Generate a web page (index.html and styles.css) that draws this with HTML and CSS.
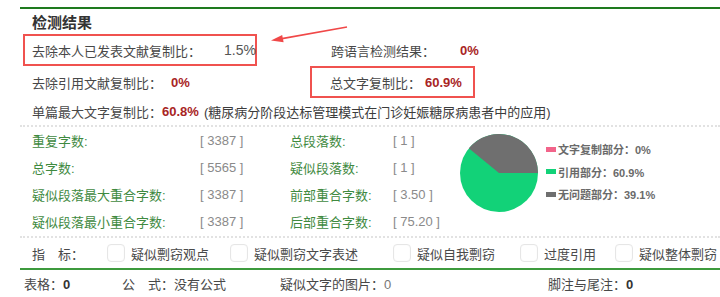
FILE: index.html
```html
<!DOCTYPE html>
<html lang="zh-CN">
<head>
<meta charset="utf-8">
<title>检测结果</title>
<link rel="stylesheet" href="styles.css">
</head>
<body>
<div class="page">
  <div class="top-rule"></div>
  <h2 class="title">检测结果</h2>

  <div class="summary">
    <div class="srow">
      <div class="cell box box1"><span class="lbl">去除本人已发表文献复制比：</span><span class="val plain v1">1.5%</span></div>
      <div class="cell pad2"><span class="lbl">跨语言检测结果：</span><span class="val red v2">0%</span></div>
    </div>
    <div class="srow">
      <div class="cell pad1"><span class="lbl">去除引用文献复制比：</span><span class="val red v3">0%</span></div>
      <div class="cell box box2"><span class="lbl">总文字复制比：</span><span class="val red v4">60.9%</span></div>
    </div>
    <div class="srow srow-last">
      <div class="cell pad1 wide"><span class="lbl">单篇最大文字复制比：</span><span class="val red">60.8%</span><span class="src">(糖尿病分阶段达标管理模式在门诊妊娠糖尿病患者中的应用)</span></div>
    </div>
  </div>

  <div class="stats">
    <div class="grid">
      <span class="k">重复字数:</span><span class="n">[ 3387 ]</span><span class="k">总段落数:</span><span class="n">[ 1 ]</span>
      <span class="k">总字数:</span><span class="n">[ 5565 ]</span><span class="k">疑似段落数:</span><span class="n">[ 1 ]</span>
      <span class="k">疑似段落最大重合字数:</span><span class="n">[ 3387 ]</span><span class="k">前部重合字数:</span><span class="n">[ 3.50 ]</span>
      <span class="k">疑似段落最小重合字数:</span><span class="n">[ 3387 ]</span><span class="k">后部重合字数:</span><span class="n">[ 75.20 ]</span>
    </div>
    <svg class="pie" width="80" height="80" viewBox="0 0 80 80">
      <circle cx="40" cy="40" r="39" fill="#12d278"/>
      <path d="M40 40 L79 40 A39 39 0 0 0 9.78 15.35 Z" fill="#6f6f6f"/>
    </svg>
    <ul class="legend">
      <li><i class="sw pink"></i>文字复制部分：0%</li>
      <li><i class="sw green"></i>引用部分：60.9%</li>
      <li><i class="sw grey"></i>无问题部分：39.1%</li>
    </ul>
  </div>

  <div class="indicators">
    <span class="ind-label">指　标：</span>
    <label class="opt o1"><span class="cb"></span>疑似剽窃观点</label>
    <label class="opt o2"><span class="cb"></span>疑似剽窃文字表述</label>
    <label class="opt o3"><span class="cb"></span>疑似自我剽窃</label>
    <label class="opt o4"><span class="cb"></span>过度引用</label>
    <label class="opt o5"><span class="cb"></span>疑似整体剽窃</label>
  </div>

  <div class="footer">
    <span class="f1">表格：<b>0</b></span>
    <span class="f2">公　式：没有公式</span>
    <span class="f3">疑似文字的图片：<span class="light">0</span></span>
    <span class="f4">脚注与尾注：<b>0</b></span>
  </div>

  <svg class="arrow" width="720" height="60" viewBox="0 0 720 60">
    <line x1="347" y1="27" x2="282" y2="38.6" stroke="#f04848" stroke-width="1.6"/>
    <polygon points="271,40.6 283.6,42.2 282.2,35.0" fill="#f04848"/>
  </svg>
</div>
</body>
</html>
```

FILE: styles.css
```css
* { box-sizing: border-box; }
html, body { margin: 0; padding: 0; background: #fff; }
body {
  font-family: "Liberation Sans", "Noto Sans CJK SC", sans-serif;
  font-size: 13px;
  color: #444;
  width: 720px;
  height: 297px;
  overflow: hidden;
}
.page { position: relative; width: 720px; height: 297px; overflow: hidden; }

.top-rule {
  margin: 7px 0 0 20px;
  border-top: 2px solid #1e7a1e;
}
.title {
  margin: 0;
  padding-left: 32px;
  height: 25px;
  line-height: 26px;
  font-size: 15px;
  font-weight: bold;
  color: #333;
  font-family: "Noto Sans CJK SC", sans-serif;
}

.summary { padding-left: 23px; }
.srow {
  display: grid;
  grid-template-columns: 287px auto;
  height: 32px;
}
.srow-last { height: 27px; }
.cell { display: flex; align-items: center; white-space: nowrap; }
.wide { grid-column: 1 / -1; }
.box { border: 2px solid #f0524f; height: 32px; }
.box1 { width: 234px; padding-left: 7px; }
.box2 { width: 165px; padding-left: 18px; }
.pad1 { padding-left: 9px; }
.pad2 { padding-left: 21px; }
.lbl { color: #484848; }
.val { font-weight: bold; }
.red { color: #a82424; }
.plain { font-weight: normal; color: #555; font-size: 14px; }
.v1 { margin-left: 23px; }
.v2 { margin-left: 25px; }
.v3 { margin-left: 9px; }
.v4 { margin-left: 4px; }
.src { color: #3c3c3c; margin-left: 5px; }

.stats {
  display: flex;
  align-items: flex-start;
  margin-left: 20px;
  padding-left: 12px;
  border-top: 2px dotted #e2e2e2;
  border-bottom: 2px dotted #e2e2e2;
  height: 113px;
}
.grid {
  display: grid;
  grid-template-columns: 168px 90px 103px 66px;
  grid-auto-rows: 27px;
  align-items: center;
}
.k { color: #3f8a3f; white-space: nowrap; }
.n { color: #8a8a8a; white-space: nowrap; }
.pie { margin-top: 6px; flex: none; }
.legend {
  list-style: none;
  margin: 11px 0 0 7px;
  padding: 0;
  font-size: 11px;
  font-weight: bold;
  color: #6a6a6a;
}
.legend li { display: flex; align-items: center; height: 22.5px; white-space: nowrap; }
.sw { display: inline-block; width: 10px; height: 5px; margin-right: 2px; }
.pink { background: #f2648a; }
.green { background: #12d278; }
.grey { background: #6f6f6f; }

.indicators {
  display: flex;
  align-items: center;
  height: 30px;
  padding-left: 32px;
}
.ind-label { width: 75px; color: #484848; white-space: nowrap; }
.opt { display: flex; align-items: center; gap: 6px; white-space: nowrap; color: #4a4a4a; }
.o1 { width: 123px; }
.o2 { width: 163px; }
.o3 { width: 127px; }
.o4 { width: 95px; }
.cb {
  display: inline-block;
  width: 18px;
  height: 18px;
  border: 1px solid #e6e6e6;
  border-radius: 4px;
  background: #fff;
  box-shadow: inset 0 0 2px rgba(0,0,0,0.04);
}

.footer {
  display: flex;
  align-items: center;
  margin-left: 20px;
  padding-left: 4px;
  border-top: 2px solid #3d9a3d;
  height: 29px;
  white-space: nowrap;
  color: #484848;
}
.footer b { color: #333; }
.f1 { width: 98px; }
.f2 { width: 158px; }
.f3 { width: 268px; }
.light { color: #777; }

.arrow { position: absolute; left: 0; top: 0; pointer-events: none; }
```
